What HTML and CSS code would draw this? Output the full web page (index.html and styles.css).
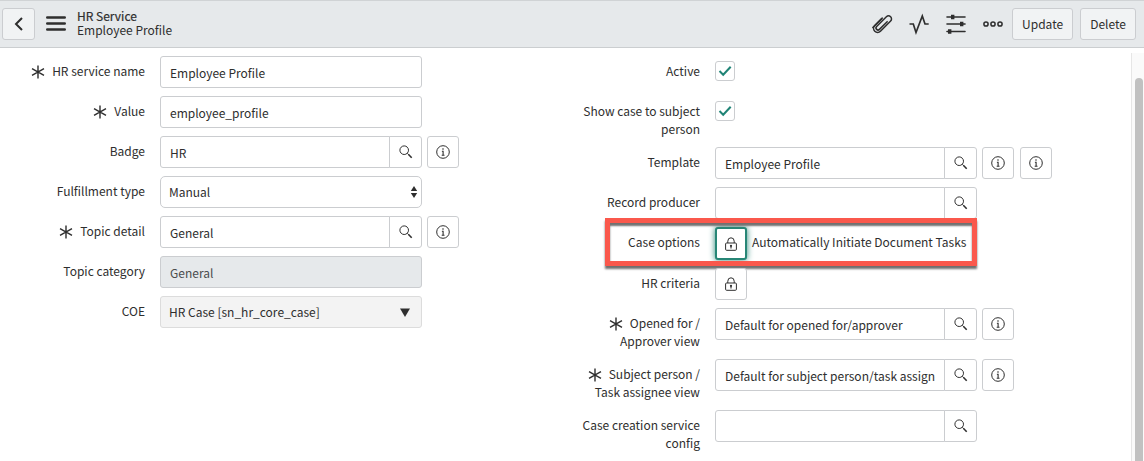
FILE: index.html
```html
<!DOCTYPE html>
<html lang="en">
<head>
<meta charset="utf-8">
<title>HR Service | Employee Profile</title>
<link rel="stylesheet" href="styles.css">
</head>
<body>
<svg class="defs" aria-hidden="true">
  <symbol id="star" viewBox="0 0 14 14"><path d="M7 0.5V13.5M1 3.7L13 10.3M13 3.7L1 10.3" fill="none" stroke="currentColor" stroke-width="1.4"/></symbol>
  <symbol id="search" viewBox="0 0 14 14"><circle cx="5.2" cy="5.2" r="4.3" fill="none" stroke="currentColor" stroke-width="1"/><path d="M8.3 8.3L9.6 9.6" stroke="currentColor" stroke-width="1"/><path d="M9.3 9.3L12.7 12.7" stroke="currentColor" stroke-width="1.6"/></symbol>
  <symbol id="info" viewBox="0 0 14 14"><circle cx="7" cy="7" r="6.3" fill="none" stroke="currentColor" stroke-width="1"/><circle cx="7" cy="4" r="0.8" fill="currentColor"/><path d="M5.9 6.2H7.1V10M5.7 10.2H8.5" fill="none" stroke="currentColor" stroke-width="1.1"/></symbol>
  <symbol id="lock" viewBox="0 0 14 14"><rect x="1.6" y="6" width="10.8" height="7.3" rx="1" fill="none" stroke="currentColor" stroke-width="1"/><path d="M3.8 6V4.2a3.2 3.4 0 0 1 6.4 0V6" fill="none" stroke="currentColor" stroke-width="1"/><circle cx="7" cy="8.8" r="1.1" fill="currentColor"/><path d="M7 9V11.6" stroke="currentColor" stroke-width="1.1"/></symbol>
</svg>

<header class="topbar">
  <button class="btn btn-square" type="button" aria-label="Back"><svg class="icon-back" viewBox="0 0 10 14"><path d="M8 1L2 7L8 13" fill="none" stroke="currentColor" stroke-width="2"/></svg></button>
  <button class="icon-btn menu-btn" type="button" aria-label="Menu"><svg class="icon-tool" viewBox="0 0 20 20"><path d="M1.3 3.5H18.7M1.3 9.5H18.7M1.3 15.5H18.7" stroke="currentColor" stroke-width="2.6" stroke-linecap="round"/></svg></button>
  <h1 class="title"><span class="title-main">HR Service</span><span>Employee Profile</span></h1>
  <div class="tools">
    <div class="tool-icons">
      <button class="icon-btn" type="button" aria-label="Attachments"><svg class="icon-tool" viewBox="0 0 20 20"><g transform="rotate(45 10 10)" fill="none" stroke="currentColor" stroke-width="1.5" stroke-linecap="round"><path d="M6 6.5V17a4 4 0 0 0 8 0V2.6a3 3 0 0 0-6 0V16.4a2 2 0 0 0 4 0V5.5" transform="translate(0 -0.8)"/><path d="M6 6.5V19"/></g></svg></button>
      <button class="icon-btn" type="button" aria-label="Activity"><svg class="icon-tool" viewBox="0 0 20 20"><path d="M0.5 10H4.3L7 18.5L13.3 2L16 10H19.7" fill="none" stroke="currentColor" stroke-width="1.7"/></svg></button>
      <button class="icon-btn" type="button" aria-label="Personalize form"><svg class="icon-tool" viewBox="0 0 20 20"><path d="M1 3H19M1 10H19M1 17.5H19" stroke="currentColor" stroke-width="1.6" stroke-linecap="round"/><path d="M5 0.7h3.4v4.6H5zM14 7.7h3.4v4.6H14zM2 15.2h3.4v4.6H2z" fill="currentColor"/></svg></button>
      <button class="icon-btn" type="button" aria-label="More options"><svg class="icon-tool" viewBox="0 0 20 20"><g fill="none" stroke="currentColor" stroke-width="1.5"><circle cx="3" cy="10" r="2.1"/><circle cx="10" cy="10" r="2.1"/><circle cx="17" cy="10" r="2.1"/></g></svg></button>
    </div>
    <button class="btn" type="button">Update</button>
    <button class="btn" type="button">Delete</button>
  </div>
</header>

<div class="body">
<form class="form">
  <div class="column">
    <div class="row">
      <label class="label" for="name"><svg class="star"><use href="#star"/></svg>HR service name</label>
      <div class="control"><input class="field" id="name" type="text" value="Employee Profile"></div>
    </div>
    <div class="row">
      <label class="label" for="value"><svg class="star"><use href="#star"/></svg>Value</label>
      <div class="control"><input class="field" id="value" type="text" value="employee_profile"></div>
    </div>
    <div class="row">
      <label class="label" for="badge">Badge</label>
      <div class="control"><input class="field joined" id="badge" type="text" value="HR"><button class="lookup" type="button" aria-label="Look up badge"><svg class="icon"><use href="#search"/></svg></button></div>
      <div class="addons"><button class="addon" type="button" aria-label="Preview badge"><svg class="icon"><use href="#info"/></svg></button></div>
    </div>
    <div class="row">
      <label class="label" for="fulfillment">Fulfillment type</label>
      <div class="control"><select class="field select" id="fulfillment"><option>Manual</option></select><svg class="updown" viewBox="0 0 8 12"><path d="M4 0L7.2 5H0.8zM4 12L7.2 7H0.8z" fill="currentColor"/></svg></div>
    </div>
    <div class="row">
      <label class="label" for="topic"><svg class="star"><use href="#star"/></svg>Topic detail</label>
      <div class="control"><input class="field joined" id="topic" type="text" value="General"><button class="lookup" type="button" aria-label="Look up topic detail"><svg class="icon"><use href="#search"/></svg></button></div>
      <div class="addons"><button class="addon" type="button" aria-label="Preview topic detail"><svg class="icon"><use href="#info"/></svg></button></div>
    </div>
    <div class="row">
      <label class="label" for="category">Topic category</label>
      <div class="control"><input class="field readonly" id="category" type="text" value="General" readonly></div>
    </div>
    <div class="row">
      <label class="label" for="coe">COE</label>
      <div class="control"><select class="field select coe" id="coe"><option>HR Case [sn_hr_core_case]</option></select><svg class="down" viewBox="0 0 10 9"><path d="M0 0.5H10L5 9z" fill="currentColor"/></svg></div>
    </div>
  </div>

  <div class="column">
    <div class="row">
      <label class="label" for="active">Active</label>
      <div class="control"><input class="check" id="active" type="checkbox" checked><svg class="tick" viewBox="0 0 14 12"><path d="M1.5 6L5.2 9.7L12.7 1.7" fill="none" stroke="currentColor" stroke-width="2"/></svg></div>
    </div>
    <div class="row">
      <label class="label" for="show">Show case to subject person</label>
      <div class="control"><input class="check" id="show" type="checkbox" checked><svg class="tick" viewBox="0 0 14 12"><path d="M1.5 6L5.2 9.7L12.7 1.7" fill="none" stroke="currentColor" stroke-width="2"/></svg></div>
    </div>
    <div class="row">
      <label class="label" for="template">Template</label>
      <div class="control"><input class="field joined" id="template" type="text" value="Employee Profile"><button class="lookup" type="button" aria-label="Look up template"><svg class="icon"><use href="#search"/></svg></button></div>
      <div class="addons"><button class="addon" type="button" aria-label="Preview template"><svg class="icon"><use href="#info"/></svg></button><button class="addon" type="button" aria-label="Template details"><svg class="icon"><use href="#info"/></svg></button></div>
    </div>
    <div class="row">
      <label class="label" for="producer">Record producer</label>
      <div class="control"><input class="field joined" id="producer" type="text"><button class="lookup" type="button" aria-label="Look up record producer"><svg class="icon"><use href="#search"/></svg></button></div>
    </div>
    <div class="row highlighted">
      <label class="label" for="options">Case options</label>
      <div class="control"><button class="addon focused" id="options" type="button"><svg class="icon"><use href="#lock"/></svg></button><span class="value">Automatically Initiate Document Tasks</span></div>
    </div>
    <div class="row">
      <label class="label" for="criteria">HR criteria</label>
      <div class="control"><button class="addon" id="criteria" type="button"><svg class="icon"><use href="#lock"/></svg></button></div>
    </div>
    <div class="row">
      <label class="label" for="opened"><svg class="star"><use href="#star"/></svg>Opened for / Approver view</label>
      <div class="control"><input class="field joined" id="opened" type="text" value="Default for opened for/approver"><button class="lookup" type="button" aria-label="Look up approver view"><svg class="icon"><use href="#search"/></svg></button></div>
      <div class="addons"><button class="addon" type="button" aria-label="Preview approver view"><svg class="icon"><use href="#info"/></svg></button></div>
    </div>
    <div class="row">
      <label class="label" for="subject"><svg class="star"><use href="#star"/></svg>Subject person / Task assignee view</label>
      <div class="control"><input class="field joined" id="subject" type="text" value="Default for subject person/task assignee"><button class="lookup" type="button" aria-label="Look up assignee view"><svg class="icon"><use href="#search"/></svg></button></div>
      <div class="addons"><button class="addon" type="button" aria-label="Preview assignee view"><svg class="icon"><use href="#info"/></svg></button></div>
    </div>
    <div class="row">
      <label class="label" for="config">Case creation service config</label>
      <div class="control"><input class="field joined" id="config" type="text"><button class="lookup" type="button" aria-label="Look up service config"><svg class="icon"><use href="#search"/></svg></button></div>
    </div>
  </div>
</form>
<div class="scroll-track"><div class="scroll-thumb"></div></div>
</div>
</body>
</html>
```
FILE: styles.css
```css
*, *::after { box-sizing: border-box; }

body {
  margin: 0;
  height: 100vh;
  display: flex;
  flex-direction: column;
  overflow: hidden;
  background: #fff;
  color: #2e2e2e;
  font: 12px/18px "Noto Sans CJK SC", "Open Sans", sans-serif;
}

button, input, select { font: inherit; color: inherit; margin: 0; }
svg { flex: none; display: block; }
.defs { position: absolute; width: 0; height: 0; }

.topbar {
  flex: none;
  display: flex;
  align-items: center;
  height: 48px;
  padding: 0 8px 0 2px;
  background: #e6e9eb;
  border-top: 1px solid #d0d3d5;
  border-bottom: 1px solid #cbced0;
}
.title {
  display: flex;
  flex-direction: column;
  margin: 0 0 3px 10px;
  font-size: 12px;
  line-height: 14px;
  font-weight: 400;
}
.title-main { -webkit-text-stroke: 0.2px currentColor; }
.tools { display: flex; align-items: center; gap: 7px; margin-left: auto; }
.tool-icons { display: flex; gap: 8px; margin-right: -2px; }

.btn {
  height: 32px;
  padding: 0 9px;
  background: #f1f3f4;
  border: 1px solid #cbcdd0;
  border-radius: 3px;
}
.btn-square { width: 33px; padding: 0; display: grid; place-items: center; }
.icon-back { width: 10px; height: 14px; }
.icon-btn {
  width: 29px;
  height: 32px;
  padding: 0;
  display: grid;
  place-items: center;
  background: none;
  border: 0;
}
.menu-btn { width: 22px; margin-left: 10px; }
.icon-tool { width: 20px; height: 20px; overflow: visible; }

.body { flex: 1; min-height: 0; display: flex; }
.form {
  flex: 1;
  display: grid;
  grid-template-columns: 1fr 1fr;
  padding: 8px 21px 0 0;
}
.column { display: flex; flex-direction: column; gap: 8px; min-width: 0; }
.row {
  position: relative;
  display: grid;
  grid-template-columns: 160fr 262fr 133fr;
  align-items: start;
}
.label { padding: 6px 15px 1px 24px; text-align: right; }
.star { display: inline-block; width: 14px; height: 14px; margin-right: 7px; vertical-align: -3px; }
.control { position: relative; display: flex; min-width: 0; min-height: 32px; }
.addons { display: flex; gap: 6px; padding-left: 5px; }

.field {
  flex: 1;
  min-width: 0;
  width: 100%;
  height: 32px;
  padding: 0 9px;
  background: #fff;
  border: 1px solid #cbcdd0;
  border-radius: 3px;
}
.joined { border-radius: 3px 0 0 3px; }
.select { appearance: none; padding: 0 8px; border-radius: 5px; }
.readonly { background: #e6e9eb; color: #4a4c4e; }
.coe { background: #f3f3f3; border-color: #dcdcdc; border-radius: 3px; }
.updown { position: absolute; right: 4px; top: 10px; width: 8px; height: 12px; pointer-events: none; }
.down { position: absolute; right: 12px; top: 12px; width: 10px; height: 9px; pointer-events: none; }

.lookup, .addon {
  flex: none;
  width: 32px;
  height: 32px;
  padding: 0;
  display: grid;
  place-items: center;
  background: #fff;
  border: 1px solid #cbcdd0;
  border-radius: 3px;
}
.lookup { width: 33px; margin-left: -1px; border-radius: 0 3px 3px 0; }
.icon { width: 14px; height: 14px; }

.check {
  appearance: none;
  width: 20px;
  height: 20px;
  margin-top: 5px;
  background: #fff;
  border: 1px solid #cbcdd0;
  border-radius: 3px;
}
.tick { position: absolute; left: 3px; top: 9px; width: 14px; height: 12px; color: #1f8476; pointer-events: none; }

.focused { height: 33px; border: 2px solid #278676; box-shadow: 0 0 6px #278676; }
.value { padding: 6px 0 0 5px; white-space: nowrap; }
.highlighted::after {
  content: "";
  position: absolute;
  left: 9%;
  right: 24%;
  top: -9px;
  height: 48px;
  border: 5px solid #fa584c;
  box-shadow: 0 3px 2px #707070, inset 0 3px 2px #707070;
  pointer-events: none;
}

.scroll-track {
  width: 13px;
  margin-top: 5px;
  padding: 25px 1px 0 3px;
  background: #fafafa;
  border-left: 1px solid #e6e6e6;
}
.scroll-thumb { height: 100%; background: #c1c1c1; border-radius: 4px 4px 0 0; }
```
